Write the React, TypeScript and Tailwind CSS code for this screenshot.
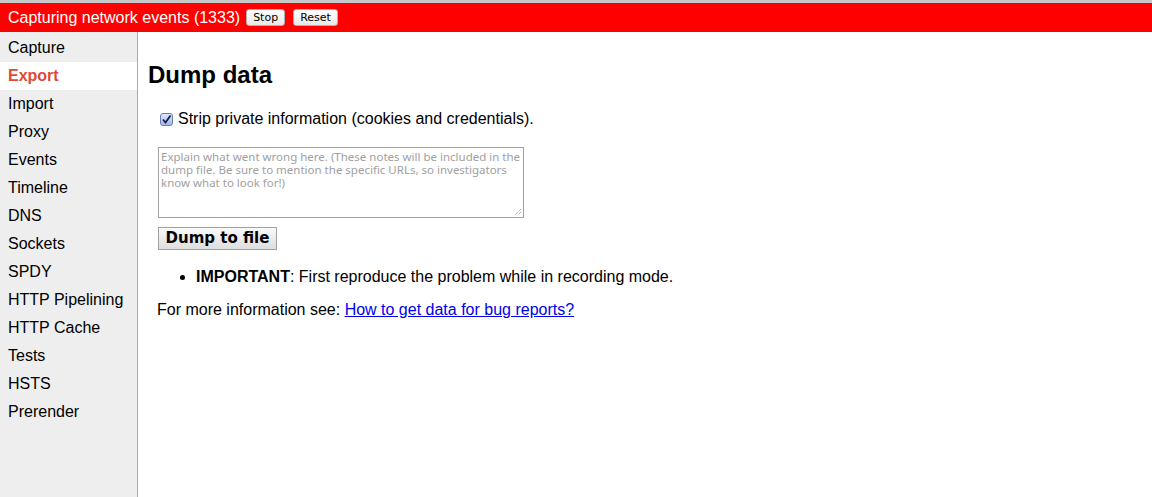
import React from "react";

const items = ["Capture","Export","Import","Proxy","Events","Timeline","DNS","Sockets","SPDY","HTTP Pipelining","HTTP Cache","Tests","HSTS","Prerender"];

export default function App() {
  return (
    <div className="w-[1152px] h-[497px] flex flex-col bg-white overflow-hidden" style={{ fontFamily: '"Liberation Sans", Arial, sans-serif' }}>
      <div className="h-[3px] bg-[#c8c8c8]" />
      <div className="h-[29px] bg-[#ff0000] flex items-center pl-[8px] shrink-0">
        <span className="text-white text-[16px] leading-none">Capturing network events (1333)</span>
        <button className="ml-[6px] h-[17px] px-[6px] bg-gradient-to-b from-white to-[#e8e8e8] rounded-[3px] border border-[#b0b0b0] text-[11px] text-black leading-none flex items-center" style={{ fontFamily: '"DejaVu Sans", sans-serif' }}>Stop</button>
        <button className="ml-[8px] h-[17px] px-[6px] bg-gradient-to-b from-white to-[#e8e8e8] rounded-[3px] border border-[#b0b0b0] text-[11px] text-black leading-none flex items-center" style={{ fontFamily: '"DejaVu Sans", sans-serif' }}>Reset</button>
      </div>
      <div className="flex flex-1">
        <div className="w-[138px] bg-[#eeeeee] border-r border-[#aaaaaa] pt-[2px] shrink-0">
          {items.map((it) => (
            <div key={it} className={"h-[28px] flex items-center pl-[8px] text-[16px] " + (it === "Export" ? "bg-white text-[#e04a32] font-bold" : "text-black")}>{it}</div>
          ))}
        </div>
        <div className="flex-1 pl-[10px] pt-[31px]">
          <h1 className="text-[24px] font-bold text-black leading-none">Dump data</h1>
          <div className="flex items-center mt-[20px] ml-[12px]">
            <div className="w-[13px] h-[13px] rounded-[3px] border border-[#6a7fb0] bg-gradient-to-b from-[#dfe8fb] to-[#9fb8ec] flex items-center justify-center">
              <svg width="11" height="11" viewBox="0 0 11 11"><path d="M2 5.5 L4.5 8.5 L9.5 1.5" stroke="#1a1a40" strokeWidth="1.8" fill="none" /></svg>
            </div>
            <span className="ml-[5px] text-[16px] text-black">Strip private information (cookies and credentials).</span>
          </div>
          <div className="mt-[16px] ml-[10px] relative w-[366px] h-[71px] border border-[#a0a0a0] px-[2px] pt-[2px] text-[11.5px] leading-[13px] text-[#a0a0a0] whitespace-nowrap" style={{ fontFamily: '"Noto Sans", sans-serif' }}>
            <div>Explain what went wrong here. (These notes will be included in the</div>
            <div>dump file. Be sure to mention the specific URLs, so investigators</div>
            <div>know what to look for!)</div>
            <svg className="absolute right-[1px] bottom-[1px]" width="8" height="8" viewBox="0 0 8 8"><path d="M7 1 L1 7 M7 4 L4 7" stroke="#888" strokeWidth="1" strokeDasharray="1 1" /></svg>
          </div>
          <button className="mt-[9px] ml-[10px] w-[119px] h-[23px] border border-[#a0a0a0] bg-gradient-to-b from-[#fafafa] to-[#dedede] text-[15px] font-bold text-black flex items-center justify-center" style={{ fontFamily: '"DejaVu Sans", sans-serif' }}>Dump to file</button>
          <ul className="mt-[15px] ml-[34px] list-disc pl-[14px] text-[16px] text-black">
            <li><b>IMPORTANT</b>: First reproduce the problem while in recording mode.</li>
          </ul>
          <p className="mt-[9px] ml-[9px] text-[16px] text-black">For more information see: <a className="text-[#0000ee] underline" href="#">How to get data for bug reports?</a></p>
        </div>
      </div>
    </div>
  );
}
